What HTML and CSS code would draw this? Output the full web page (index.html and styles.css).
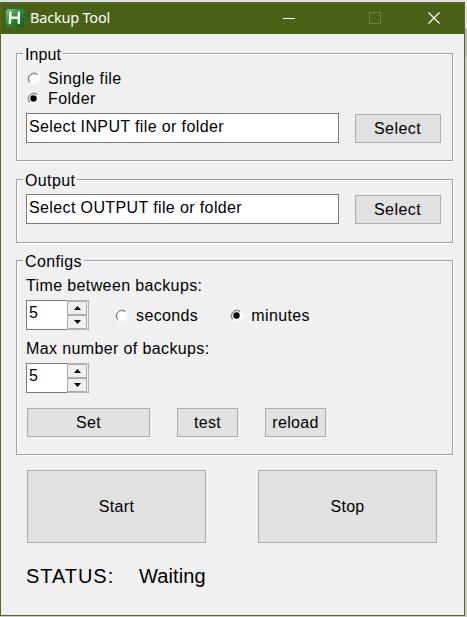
FILE: index.html
```html
<!DOCTYPE html>
<html lang="en">
<head>
<meta charset="utf-8">
<title>Backup Tool</title>
<link rel="stylesheet" href="styles.css">
</head>
<body>
<svg width="0" height="0" class="symbols">
  <symbol id="ring" viewBox="0 0 14 14">
    <circle cx="6.5" cy="6.5" r="6.5" fill="#fff"/>
    <path d="M2.3 10.7A6 6 0 0 1 10.7 2.3" fill="none" stroke="#a0a0a0" stroke-width="1"/>
    <path d="M2.9 10.1A5.1 5.1 0 0 1 10.1 2.9" fill="none" stroke="#696969" stroke-width=".9"/>
    <path d="M10.4 2.6A5.5 5.5 0 0 1 2.6 10.4" fill="none" stroke="#e8e8e8" stroke-width=".6"/>
  </symbol>
</svg>
<main class="window">
  <header class="titlebar">
    <svg class="app-icon" width="20" height="20" viewBox="0 0 20 20">
      <defs><linearGradient id="g" x1="0" y1="0" x2="1" y2="1"><stop offset="0" stop-color="#8cc58c"/><stop offset=".45" stop-color="#358a3d"/><stop offset="1" stop-color="#0d5713"/></linearGradient></defs>
      <rect x=".5" y=".5" width="19" height="19" rx="3.5" fill="url(#g)" stroke="#28702f"/>
      <path d="M5.5 4.5L4.8 15M13.8 4.5V15M5.4 9.8H14" fill="none" stroke="#f4fff4" stroke-width="2.4" stroke-linecap="round"/>
    </svg>
    <h1 class="title">Backup Tool</h1>
    <svg class="controls" width="160" height="32" viewBox="0 0 160 32" fill="none">
      <path d="M0 16.5h12" stroke="#fff"/>
      <rect x="86.5" y="10.5" width="11" height="11" stroke="#6f8345"/>
      <path d="M145.5 10.5l11 11M156.5 10.5l-11 11" stroke="#fff" stroke-width="1.2"/>
    </svg>
  </header>
  <section class="group group-input">
    <h2 class="legend narrow">Input</h2>
    <label class="option"><svg class="radio"><use href="#ring"/></svg><span>Single file</span></label>
    <label class="option"><svg class="radio"><use href="#ring"/><circle cx="6.5" cy="6.5" r="3.2"/></svg><span>Folder</span></label>
    <div class="file-row"><div class="field">Select INPUT file or folder</div><button class="btn select">Select</button></div>
  </section>
  <section class="group group-output">
    <h2 class="legend">Output</h2>
    <div class="file-row"><div class="field">Select OUTPUT file or folder</div><button class="btn select">Select</button></div>
  </section>
  <section class="group group-configs">
    <h2 class="legend">Configs</h2>
    <p class="caption time">Time between backups:</p>
    <div class="time-row">
      <div class="spinner"><span>5</span><div class="arrows"><b><svg width="7" height="4"><path d="M0 4L3.5 0L7 4z"/></svg></b><b><svg width="7" height="4"><path d="M0 0L3.5 4L7 0z"/></svg></b></div></div>
      <label class="option seconds"><svg class="radio"><use href="#ring"/></svg><span>seconds</span></label>
      <label class="option minutes"><svg class="radio"><use href="#ring"/><circle cx="6.5" cy="6.5" r="3.2"/></svg><span>minutes</span></label>
    </div>
    <p class="caption max">Max number of backups:</p>
    <div class="spinner"><span>5</span><div class="arrows"><b><svg width="7" height="4"><path d="M0 4L3.5 0L7 4z"/></svg></b><b><svg width="7" height="4"><path d="M0 0L3.5 4L7 0z"/></svg></b></div></div>
    <div class="actions"><button class="btn set">Set</button><button class="btn small">test</button><button class="btn small">reload</button></div>
  </section>
  <div class="run-row"><button class="btn run">Start</button><button class="btn run">Stop</button></div>
  <div class="status"><span class="status-name">STATUS:</span><span class="status-value">Waiting</span></div>
</main>
</body>
</html>
```
FILE: styles.css
```css
* { box-sizing: border-box; }
body {
  margin: 0;
  height: 617px;
  padding-top: 2px;
  overflow: hidden;
  background: linear-gradient(#e4e4e8 0 28px, #b8b8b8 29px 56px, #c9c9c9 57px);
  font: 16px/20px "Liberation Sans", Arial, sans-serif;
  letter-spacing: .38px;
  color: #000;
}
.symbols { position: absolute; }
.window {
  width: 465px;
  height: 614px;
  background: #f0f0f0;
  border: 1px solid #556b24;
  box-shadow: 0 -2px 0 #dedee2;
}
.titlebar {
  display: flex;
  align-items: center;
  height: 31px;
  padding-left: 4px;
  background: #4a6016;
}
.app-icon { margin-top: -1px; }
.title {
  width: 150px;
  margin: -3px 0 0 5px;
  font: 14.5px/20px "Noto Sans", "Open Sans", sans-serif;
  letter-spacing: -.2px;
  color: #fff;
}
.controls { margin-left: 103px; margin-top: -1px; }
.group {
  width: 437px;
  margin-left: 15px;
  padding-left: 9px;
  border: 1px solid #a0a0a0;
  box-shadow: 1px 1px #fff, inset 1px 1px #fff;
}
.group-input { height: 108px; margin-top: 19px; }
.group-output { height: 64px; margin-top: 18px; }
.group-configs { height: 195px; margin-top: 17px; }
.legend {
  width: max-content;
  height: 20px;
  margin: -9px 0 0 -3px;
  padding: 0 2px;
  background: #f0f0f0;
  font: inherit;
}
.narrow { letter-spacing: .1px; }
.option { display: flex; align-items: center; height: 20px; gap: 7px; }
.group-input .option:nth-of-type(1) { margin-top: 4px; }
.radio { width: 14px; height: 14px; margin: -1px 0 0 1px; }
.file-row { display: flex; align-items: flex-end; height: 30px; margin-top: 4px; }
.group-output .file-row { margin-top: 3px; }
.field {
  width: 313px;
  height: 30px;
  padding: 3px 0 0 2px;
  border: 1px solid #7a7a7a;
  background: #fff;
  white-space: nowrap;
}
.btn {
  padding: 0;
  border: 1px solid #adadad;
  background: #e1e1e1;
  color: #000;
  font: 16px/20px "Liberation Sans", Arial, sans-serif;
  letter-spacing: .3px;
}
.select { width: 86px; height: 29px; margin-left: 16px; padding-right: 1px; letter-spacing: .45px; }
.caption { height: 20px; margin: 4px 0 0; }
.time-row { display: flex; height: 30px; margin-top: 4px; }
.max { margin-top: 9px; }
.max + .spinner { margin-top: 4px; }
.spinner {
  display: flex;
  justify-content: space-between;
  width: 63px;
  height: 30px;
  padding-left: 2px;
  background: #fff;
  border: 1px solid #7a7a7a;
  border-right-color: #b3b3bb;
}
.spinner span { padding-top: 2px; }
.arrows {
  display: grid;
  grid-template-rows: 14px 14px;
  width: 21px;
  height: 30px;
  margin: -1px 0;
  padding: 0 1px 0 0;
  background: #f0f0f0;
  border: solid #b3b3bb;
  border-width: 1px 0;
}
.arrows b { display: grid; place-items: center; border: 1px solid #adadad; background: #efefef; }
.arrows svg { display: block; }
.seconds { margin: 6px 0 0 25px; }
.minutes { margin: 6px 0 0 31px; }
.actions { display: flex; gap: 27px; margin: 15px 0 0 1px; }
.actions .btn { height: 29px; }
.set { width: 123px; }
.small { width: 61px; }
.run-row { display: flex; gap: 52px; margin: 15px 0 0 26px; }
.run { width: 179px; height: 73px; }
.status { display: flex; margin: 21px 0 0 25px; font-size: 20px; line-height: 24px; letter-spacing: .1px; }
.status-name { width: 113px; letter-spacing: .95px; }
```
